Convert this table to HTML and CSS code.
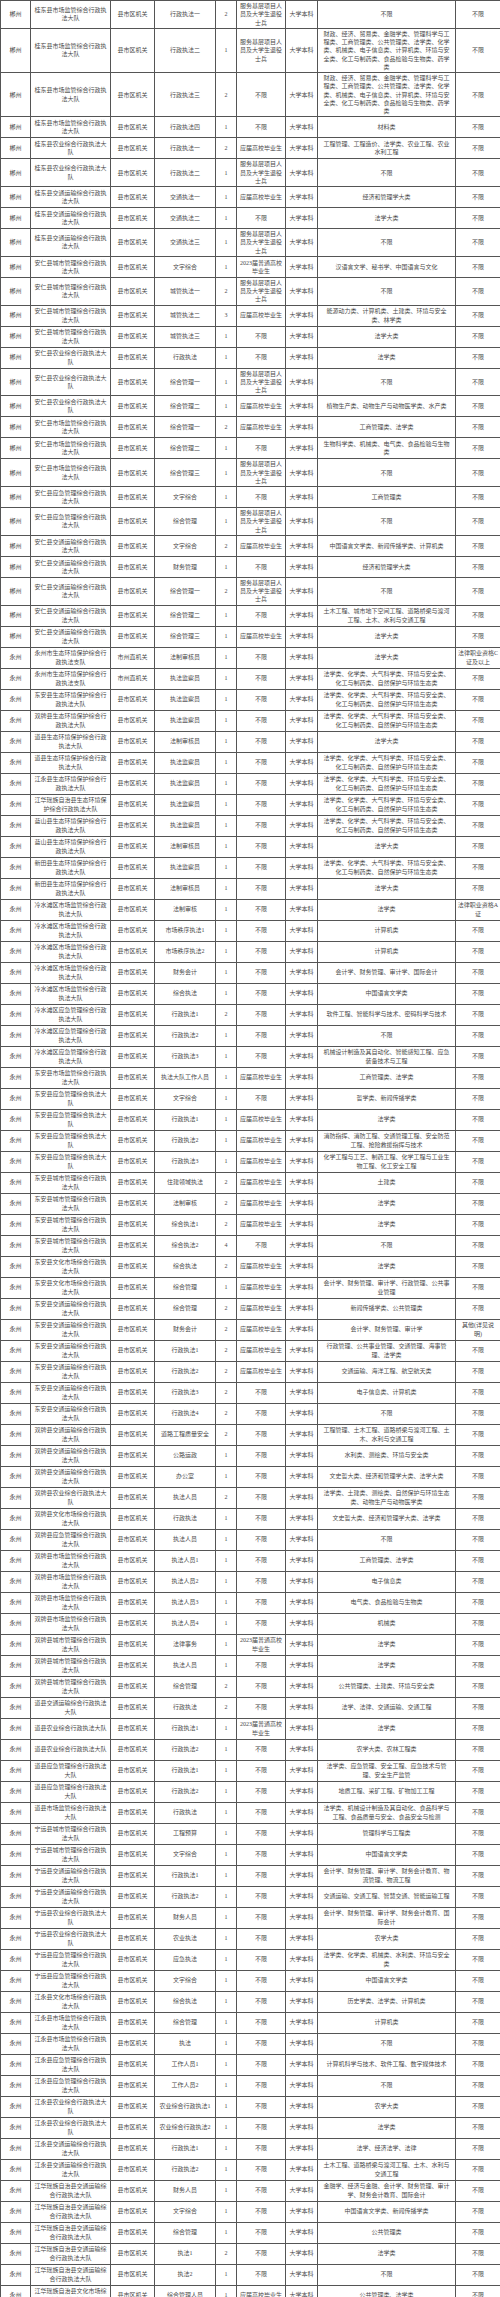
FILE: index.html
```html
<!DOCTYPE html>
<html lang="zh-CN">
<head>
<meta charset="utf-8">
<title>职位表</title>
<link rel="stylesheet" href="styles.css">
</head>
<body>
<table class="grid">
<colgroup>
<col class="c1"><col class="c2"><col class="c3"><col class="c4"><col class="c5"><col class="c6"><col class="c7"><col class="c8"><col class="c9">
</colgroup>
<tbody>
<tr><td>郴州</td><td>桂东县市场监管综合行政执法大队</td><td>县市区机关</td><td>行政执法一</td><td>2</td><td>服务基层项目人员及大学生退役士兵</td><td>大学本科</td><td>不限</td><td>不限</td></tr>
<tr><td>郴州</td><td>桂东县市场监管综合行政执法大队</td><td>县市区机关</td><td>行政执法二</td><td>1</td><td>服务基层项目人员及大学生退役士兵</td><td>大学本科</td><td>财政、经济、贸易类、金融学类、管理科学与工程类、工商管理类、公共管理类、法学类、化学类、机械类、电子信息类、计算机类、环境与安全类、化工与制药类、食品检验与生物类、药学类</td><td>不限</td></tr>
<tr><td>郴州</td><td>桂东县市场监管综合行政执法大队</td><td>县市区机关</td><td>行政执法三</td><td>2</td><td>不限</td><td>大学本科</td><td>财政、经济、贸易类、金融学类、管理科学与工程类、工商管理类、公共管理类、法学类、化学类、机械类、电子信息类、计算机类、环境与安全类、化工与制药类、食品检验与生物类、药学类</td><td>不限</td></tr>
<tr><td>郴州</td><td>桂东县市场监管综合行政执法大队</td><td>县市区机关</td><td>行政执法四</td><td>1</td><td>不限</td><td>大学本科</td><td>材料类</td><td>不限</td></tr>
<tr><td>郴州</td><td>桂东县农业综合行政执法大队</td><td>县市区机关</td><td>行政执法一</td><td>2</td><td>应届高校毕业生</td><td>大学本科</td><td>工程管理、工程造价、法学类、农业工程、农业水利工程</td><td>不限</td></tr>
<tr><td>郴州</td><td>桂东县农业综合行政执法大队</td><td>县市区机关</td><td>行政执法二</td><td>1</td><td>服务基层项目人员及大学生退役士兵</td><td>大学本科</td><td>不限</td><td>不限</td></tr>
<tr><td>郴州</td><td>桂东县交通运输综合行政执法大队</td><td>县市区机关</td><td>交通执法一</td><td>1</td><td>应届高校毕业生</td><td>大学本科</td><td>经济和管理学大类</td><td>不限</td></tr>
<tr><td>郴州</td><td>桂东县交通运输综合行政执法大队</td><td>县市区机关</td><td>交通执法二</td><td>1</td><td>不限</td><td>大学本科</td><td>法学大类</td><td>不限</td></tr>
<tr><td>郴州</td><td>桂东县交通运输综合行政执法大队</td><td>县市区机关</td><td>交通执法三</td><td>1</td><td>服务基层项目人员及大学生退役士兵</td><td>大学本科</td><td>不限</td><td>不限</td></tr>
<tr><td>郴州</td><td>安仁县城市管理综合行政执法大队</td><td>县市区机关</td><td>文字综合</td><td>1</td><td>2023届普通高校毕业生</td><td>大学本科</td><td>汉语言文学、秘书学、中国语言与文化</td><td>不限</td></tr>
<tr><td>郴州</td><td>安仁县城市管理综合行政执法大队</td><td>县市区机关</td><td>城管执法一</td><td>2</td><td>服务基层项目人员及大学生退役士兵</td><td>大学本科</td><td>不限</td><td>不限</td></tr>
<tr><td>郴州</td><td>安仁县城市管理综合行政执法大队</td><td>县市区机关</td><td>城管执法二</td><td>3</td><td>应届高校毕业生</td><td>大学本科</td><td>能源动力类、计算机类、土建类、环境与安全类、林学类</td><td>不限</td></tr>
<tr><td>郴州</td><td>安仁县城市管理综合行政执法大队</td><td>县市区机关</td><td>城管执法三</td><td>1</td><td>不限</td><td>大学本科</td><td>法学大类</td><td>不限</td></tr>
<tr><td>郴州</td><td>安仁县农业综合行政执法大队</td><td>县市区机关</td><td>行政执法</td><td>1</td><td>不限</td><td>大学本科</td><td>法学类</td><td>不限</td></tr>
<tr><td>郴州</td><td>安仁县农业综合行政执法大队</td><td>县市区机关</td><td>综合管理一</td><td>1</td><td>服务基层项目人员及大学生退役士兵</td><td>大学本科</td><td>不限</td><td>不限</td></tr>
<tr><td>郴州</td><td>安仁县农业综合行政执法大队</td><td>县市区机关</td><td>综合管理二</td><td>1</td><td>应届高校毕业生</td><td>大学本科</td><td>植物生产类、动物生产与动物医学类、水产类</td><td>不限</td></tr>
<tr><td>郴州</td><td>安仁县市场监管综合行政执法大队</td><td>县市区机关</td><td>综合管理一</td><td>2</td><td>应届高校毕业生</td><td>大学本科</td><td>工商管理类、法学类</td><td>不限</td></tr>
<tr><td>郴州</td><td>安仁县市场监管综合行政执法大队</td><td>县市区机关</td><td>综合管理二</td><td>1</td><td>不限</td><td>大学本科</td><td>生物科学类、机械类、电气类、食品检验与生物类</td><td>不限</td></tr>
<tr><td>郴州</td><td>安仁县市场监管综合行政执法大队</td><td>县市区机关</td><td>综合管理三</td><td>1</td><td>服务基层项目人员及大学生退役士兵</td><td>大学本科</td><td>不限</td><td>不限</td></tr>
<tr><td>郴州</td><td>安仁县应急管理综合行政执法大队</td><td>县市区机关</td><td>文字综合</td><td>1</td><td>不限</td><td>大学本科</td><td>工商管理类</td><td>不限</td></tr>
<tr><td>郴州</td><td>安仁县应急管理综合行政执法大队</td><td>县市区机关</td><td>综合管理</td><td>1</td><td>服务基层项目人员及大学生退役士兵</td><td>大学本科</td><td>不限</td><td>不限</td></tr>
<tr><td>郴州</td><td>安仁县交通运输综合行政执法大队</td><td>县市区机关</td><td>文字综合</td><td>2</td><td>应届高校毕业生</td><td>大学本科</td><td>中国语言文学类、新闻传播学类、计算机类</td><td>不限</td></tr>
<tr><td>郴州</td><td>安仁县交通运输综合行政执法大队</td><td>县市区机关</td><td>财务管理</td><td>1</td><td>不限</td><td>大学本科</td><td>经济和管理学大类</td><td>不限</td></tr>
<tr><td>郴州</td><td>安仁县交通运输综合行政执法大队</td><td>县市区机关</td><td>综合管理一</td><td>2</td><td>服务基层项目人员及大学生退役士兵</td><td>大学本科</td><td>不限</td><td>不限</td></tr>
<tr><td>郴州</td><td>安仁县交通运输综合行政执法大队</td><td>县市区机关</td><td>综合管理二</td><td>1</td><td>不限</td><td>大学本科</td><td>土木工程、城市地下空间工程、道路桥梁与渡河工程、土木、水利与交通工程</td><td>不限</td></tr>
<tr><td>郴州</td><td>安仁县交通运输综合行政执法大队</td><td>县市区机关</td><td>综合管理三</td><td>1</td><td>应届高校毕业生</td><td>大学本科</td><td>法学大类</td><td>不限</td></tr>
<tr><td>永州</td><td>永州市生态环境保护综合行政执法支队</td><td>市州直机关</td><td>法制审核员</td><td>1</td><td>不限</td><td>大学本科</td><td>法学大类</td><td>法律职业资格C<br>证及以上</td></tr>
<tr><td>永州</td><td>永州市生态环境保护综合行政执法支队</td><td>市州直机关</td><td>执法监察员</td><td>1</td><td>不限</td><td>大学本科</td><td>法学类、化学类、大气科学类、环境与安全类、化工与制药类、自然保护与环境生态类</td><td>不限</td></tr>
<tr><td>永州</td><td>东安县生态环境保护综合行政执法大队</td><td>县市区机关</td><td>执法监察员</td><td>1</td><td>不限</td><td>大学本科</td><td>法学类、化学类、大气科学类、环境与安全类、化工与制药类、自然保护与环境生态类</td><td>不限</td></tr>
<tr><td>永州</td><td>双牌县生态环境保护综合行政执法大队</td><td>县市区机关</td><td>执法监察员</td><td>1</td><td>不限</td><td>大学本科</td><td>法学类、化学类、大气科学类、环境与安全类、化工与制药类、自然保护与环境生态类</td><td>不限</td></tr>
<tr><td>永州</td><td>道县生态环境保护综合行政执法大队</td><td>县市区机关</td><td>法制审核员</td><td>1</td><td>不限</td><td>大学本科</td><td>法学大类</td><td>不限</td></tr>
<tr><td>永州</td><td>道县生态环境保护综合行政执法大队</td><td>县市区机关</td><td>执法监察员</td><td>1</td><td>不限</td><td>大学本科</td><td>法学类、化学类、大气科学类、环境与安全类、化工与制药类、自然保护与环境生态类</td><td>不限</td></tr>
<tr><td>永州</td><td>江永县生态环境保护综合行政执法大队</td><td>县市区机关</td><td>执法监察员</td><td>1</td><td>不限</td><td>大学本科</td><td>法学类、化学类、大气科学类、环境与安全类、化工与制药类、自然保护与环境生态类</td><td>不限</td></tr>
<tr><td>永州</td><td>江华瑶族自治县生态环境保护综合行政执法大队</td><td>县市区机关</td><td>执法监察员</td><td>1</td><td>不限</td><td>大学本科</td><td>法学类、化学类、大气科学类、环境与安全类、化工与制药类、自然保护与环境生态类</td><td>不限</td></tr>
<tr><td>永州</td><td>蓝山县生态环境保护综合行政执法大队</td><td>县市区机关</td><td>执法监察员</td><td>1</td><td>不限</td><td>大学本科</td><td>法学类、化学类、大气科学类、环境与安全类、化工与制药类、自然保护与环境生态类</td><td>不限</td></tr>
<tr><td>永州</td><td>蓝山县生态环境保护综合行政执法大队</td><td>县市区机关</td><td>法制审核员</td><td>1</td><td>不限</td><td>大学本科</td><td>法学大类</td><td>不限</td></tr>
<tr><td>永州</td><td>新田县生态环境保护综合行政执法大队</td><td>县市区机关</td><td>执法监察员</td><td>1</td><td>不限</td><td>大学本科</td><td>法学类、化学类、大气科学类、环境与安全类、化工与制药类、自然保护与环境生态类</td><td>不限</td></tr>
<tr><td>永州</td><td>新田县生态环境保护综合行政执法大队</td><td>县市区机关</td><td>法制审核员</td><td>1</td><td>不限</td><td>大学本科</td><td>法学大类</td><td>不限</td></tr>
<tr><td>永州</td><td>冷水滩区市场监管综合行政执法大队</td><td>县市区机关</td><td>法制审核</td><td>1</td><td>不限</td><td>大学本科</td><td>法学类</td><td>法律职业资格A<br>证</td></tr>
<tr><td>永州</td><td>冷水滩区市场监管综合行政执法大队</td><td>县市区机关</td><td>市场秩序执法1</td><td>1</td><td>不限</td><td>大学本科</td><td>计算机类</td><td>不限</td></tr>
<tr><td>永州</td><td>冷水滩区市场监管综合行政执法大队</td><td>县市区机关</td><td>市场秩序执法2</td><td>1</td><td>不限</td><td>大学本科</td><td>计算机类</td><td>不限</td></tr>
<tr><td>永州</td><td>冷水滩区市场监管综合行政执法大队</td><td>县市区机关</td><td>财务会计</td><td>1</td><td>不限</td><td>大学本科</td><td>会计学、财务管理、审计学、国际会计</td><td>不限</td></tr>
<tr><td>永州</td><td>冷水滩区市场监管综合行政执法大队</td><td>县市区机关</td><td>综合执法</td><td>1</td><td>不限</td><td>大学本科</td><td>中国语言文学类</td><td>不限</td></tr>
<tr><td>永州</td><td>冷水滩区应急管理综合行政执法大队</td><td>县市区机关</td><td>行政执法1</td><td>2</td><td>不限</td><td>大学本科</td><td>软件工程、智能科学与技术、密码科学与技术</td><td>不限</td></tr>
<tr><td>永州</td><td>冷水滩区应急管理综合行政执法大队</td><td>县市区机关</td><td>行政执法2</td><td>1</td><td>不限</td><td>大学本科</td><td>不限</td><td>不限</td></tr>
<tr><td>永州</td><td>冷水滩区应急管理综合行政执法大队</td><td>县市区机关</td><td>行政执法3</td><td>1</td><td>不限</td><td>大学本科</td><td>机械设计制造及其自动化、智能感知工程、应急装备技术与工程</td><td>不限</td></tr>
<tr><td>永州</td><td>东安县市场监管综合行政执法大队</td><td>县市区机关</td><td>执法大队工作人员</td><td>1</td><td>应届高校毕业生</td><td>大学本科</td><td>工商管理类、法学类</td><td>不限</td></tr>
<tr><td>永州</td><td>东安县应急管理综合执法大队</td><td>县市区机关</td><td>文字综合</td><td>1</td><td>不限</td><td>大学本科</td><td>哲学类、新闻传播学类</td><td>不限</td></tr>
<tr><td>永州</td><td>东安县应急管理综合执法大队</td><td>县市区机关</td><td>行政执法1</td><td>1</td><td>应届高校毕业生</td><td>大学本科</td><td>法学类</td><td>不限</td></tr>
<tr><td>永州</td><td>东安县应急管理综合执法大队</td><td>县市区机关</td><td>行政执法2</td><td>1</td><td>应届高校毕业生</td><td>大学本科</td><td>消防指挥、消防工程、交通管理工程、安全防范工程、抢险救援指挥与技术</td><td>不限</td></tr>
<tr><td>永州</td><td>东安县应急管理综合执法大队</td><td>县市区机关</td><td>行政执法3</td><td>1</td><td>应届高校毕业生</td><td>大学本科</td><td>化学工程与工艺、制药工程、化学工程与工业生物工程、化工安全工程</td><td>不限</td></tr>
<tr><td>永州</td><td>东安县城市管理综合行政执法大队</td><td>县市区机关</td><td>住建领域执法</td><td>2</td><td>应届高校毕业生</td><td>大学本科</td><td>土建类</td><td>不限</td></tr>
<tr><td>永州</td><td>东安县城市管理综合行政执法大队</td><td>县市区机关</td><td>法制审核</td><td>2</td><td>应届高校毕业生</td><td>大学本科</td><td>法学类</td><td>不限</td></tr>
<tr><td>永州</td><td>东安县城市管理综合行政执法大队</td><td>县市区机关</td><td>综合执法1</td><td>2</td><td>应届高校毕业生</td><td>大学本科</td><td>法学类</td><td>不限</td></tr>
<tr><td>永州</td><td>东安县城市管理综合行政执法大队</td><td>县市区机关</td><td>综合执法2</td><td>4</td><td>不限</td><td>大学本科</td><td>不限</td><td>不限</td></tr>
<tr><td>永州</td><td>东安县文化市场综合行政执法大队</td><td>县市区机关</td><td>综合执法</td><td>2</td><td>应届高校毕业生</td><td>大学本科</td><td>法学类</td><td>不限</td></tr>
<tr><td>永州</td><td>东安县文化市场综合行政执法大队</td><td>县市区机关</td><td>综合管理</td><td>1</td><td>应届高校毕业生</td><td>大学本科</td><td>会计学、财务管理、审计学、行政管理、公共事业管理</td><td>不限</td></tr>
<tr><td>永州</td><td>东安县交通运输综合行政执法大队</td><td>县市区机关</td><td>综合管理</td><td>2</td><td>应届高校毕业生</td><td>大学本科</td><td>新闻传播学类、公共管理类</td><td>不限</td></tr>
<tr><td>永州</td><td>东安县交通运输综合行政执法大队</td><td>县市区机关</td><td>财务会计</td><td>2</td><td>应届高校毕业生</td><td>大学本科</td><td>会计学、财务管理、审计学</td><td>其他(详见说<br>明)</td></tr>
<tr><td>永州</td><td>东安县交通运输综合行政执法大队</td><td>县市区机关</td><td>行政执法1</td><td>2</td><td>应届高校毕业生</td><td>大学本科</td><td>行政管理、公共事业管理、交通管理、海事管理、法学类</td><td>不限</td></tr>
<tr><td>永州</td><td>东安县交通运输综合行政执法大队</td><td>县市区机关</td><td>行政执法2</td><td>2</td><td>应届高校毕业生</td><td>大学本科</td><td>交通运输、海洋工程、航空航天类</td><td>不限</td></tr>
<tr><td>永州</td><td>东安县交通运输综合行政执法大队</td><td>县市区机关</td><td>行政执法3</td><td>2</td><td>不限</td><td>大学本科</td><td>电子信息类、计算机类</td><td>不限</td></tr>
<tr><td>永州</td><td>东安县交通运输综合行政执法大队</td><td>县市区机关</td><td>行政执法4</td><td>2</td><td>不限</td><td>大学本科</td><td>不限</td><td>不限</td></tr>
<tr><td>永州</td><td>双牌县交通运输综合行政执法大队</td><td>县市区机关</td><td>道路工程质量安全</td><td>2</td><td>不限</td><td>大学本科</td><td>工程管理、土木工程、道路桥梁与渡河工程、土木、水利与交通工程</td><td>不限</td></tr>
<tr><td>永州</td><td>双牌县交通运输综合行政执法大队</td><td>县市区机关</td><td>公路运政</td><td>1</td><td>不限</td><td>大学本科</td><td>水利类、测绘类、环境与安全类</td><td>不限</td></tr>
<tr><td>永州</td><td>双牌县交通运输综合行政执法大队</td><td>县市区机关</td><td>办公室</td><td>1</td><td>不限</td><td>大学本科</td><td>文史哲大类、经济和管理学大类、法学大类</td><td>不限</td></tr>
<tr><td>永州</td><td>双牌县农业综合行政执法大队</td><td>县市区机关</td><td>执法人员</td><td>2</td><td>不限</td><td>大学本科</td><td>法学类、土建类、测绘类、自然保护与环境生态类、动物生产与动物医学类</td><td>不限</td></tr>
<tr><td>永州</td><td>双牌县文化市场综合行政执法大队</td><td>县市区机关</td><td>行政执法</td><td>1</td><td>不限</td><td>大学本科</td><td>文史哲大类、经济和管理学大类、法学类</td><td>不限</td></tr>
<tr><td>永州</td><td>双牌县应急管理综合行政执法大队</td><td>县市区机关</td><td>执法人员</td><td>1</td><td>不限</td><td>大学本科</td><td>不限</td><td>不限</td></tr>
<tr><td>永州</td><td>双牌县市场监管综合行政执法大队</td><td>县市区机关</td><td>执法人员1</td><td>1</td><td>不限</td><td>大学本科</td><td>工商管理类、法学类</td><td>不限</td></tr>
<tr><td>永州</td><td>双牌县市场监管综合行政执法大队</td><td>县市区机关</td><td>执法人员2</td><td>1</td><td>不限</td><td>大学本科</td><td>电子信息类</td><td>不限</td></tr>
<tr><td>永州</td><td>双牌县市场监管综合行政执法大队</td><td>县市区机关</td><td>执法人员3</td><td>1</td><td>不限</td><td>大学本科</td><td>电气类、食品检验与生物类</td><td>不限</td></tr>
<tr><td>永州</td><td>双牌县市场监管综合行政执法大队</td><td>县市区机关</td><td>执法人员4</td><td>1</td><td>不限</td><td>大学本科</td><td>机械类</td><td>不限</td></tr>
<tr><td>永州</td><td>双牌县城市管理综合行政执法大队</td><td>县市区机关</td><td>法律事务</td><td>1</td><td>2023届普通高校毕业生</td><td>大学本科</td><td>法学类</td><td>不限</td></tr>
<tr><td>永州</td><td>双牌县城市管理综合行政执法大队</td><td>县市区机关</td><td>执法人员</td><td>1</td><td>不限</td><td>大学本科</td><td>法学类</td><td>不限</td></tr>
<tr><td>永州</td><td>双牌县城市管理综合行政执法大队</td><td>县市区机关</td><td>综合管理</td><td>2</td><td>不限</td><td>大学本科</td><td>公共管理类、土建类、环境与安全类</td><td>不限</td></tr>
<tr><td>永州</td><td>道县交通运输综合行政执法大队</td><td>县市区机关</td><td>行政执法</td><td>2</td><td>不限</td><td>大学本科</td><td>法学、法律、交通运输、交通工程</td><td>不限</td></tr>
<tr><td>永州</td><td>道县农业综合行政执法大队</td><td>县市区机关</td><td>行政执法1</td><td>1</td><td>2023届普通高校毕业生</td><td>大学本科</td><td>法学类</td><td>不限</td></tr>
<tr><td>永州</td><td>道县农业综合行政执法大队</td><td>县市区机关</td><td>行政执法2</td><td>1</td><td>不限</td><td>大学本科</td><td>农学大类、农林工程类</td><td>不限</td></tr>
<tr><td>永州</td><td>道县应急管理综合行政执法大队</td><td>县市区机关</td><td>行政执法1</td><td>1</td><td>不限</td><td>大学本科</td><td>法学类、应急管理、安全工程、应急技术与管理、安全生产监管</td><td>不限</td></tr>
<tr><td>永州</td><td>道县应急管理综合行政执法大队</td><td>县市区机关</td><td>行政执法2</td><td>1</td><td>不限</td><td>大学本科</td><td>地质工程、采矿工程、矿物加工工程</td><td>不限</td></tr>
<tr><td>永州</td><td>道县市场监管综合行政执法大队</td><td>县市区机关</td><td>行政执法</td><td>1</td><td>不限</td><td>大学本科</td><td>法学类、机械设计制造及其自动化、食品科学与工程、食品质量与安全、食品安全与检测</td><td>不限</td></tr>
<tr><td>永州</td><td>宁远县城市管理综合行政执法大队</td><td>县市区机关</td><td>工程预算</td><td>1</td><td>不限</td><td>大学本科</td><td>管理科学与工程类</td><td>不限</td></tr>
<tr><td>永州</td><td>宁远县城市管理综合行政执法大队</td><td>县市区机关</td><td>文字综合</td><td>1</td><td>不限</td><td>大学本科</td><td>中国语言文学类</td><td>不限</td></tr>
<tr><td>永州</td><td>宁远县交通运输综合行政执法大队</td><td>县市区机关</td><td>行政执法1</td><td>1</td><td>不限</td><td>大学本科</td><td>会计学、财务管理、审计学、财务会计教育、物流管理、物流工程</td><td>不限</td></tr>
<tr><td>永州</td><td>宁远县交通运输综合行政执法大队</td><td>县市区机关</td><td>行政执法2</td><td>1</td><td>不限</td><td>大学本科</td><td>交通运输、交通工程、智慧交通、智能运输工程</td><td>不限</td></tr>
<tr><td>永州</td><td>宁远县农业综合行政执法大队</td><td>县市区机关</td><td>财务人员</td><td>1</td><td>不限</td><td>大学本科</td><td>会计学、财务管理、审计学、财务会计教育、国际会计</td><td>不限</td></tr>
<tr><td>永州</td><td>宁远县农业综合行政执法大队</td><td>县市区机关</td><td>农业执法</td><td>1</td><td>不限</td><td>大学本科</td><td>农学大类</td><td>不限</td></tr>
<tr><td>永州</td><td>宁远县应急管理综合行政执法大队</td><td>县市区机关</td><td>应急执法</td><td>1</td><td>不限</td><td>大学本科</td><td>法学类、化学类、机械类、水利类、环境与安全类</td><td>不限</td></tr>
<tr><td>永州</td><td>宁远县应急管理综合行政执法大队</td><td>县市区机关</td><td>文字综合</td><td>1</td><td>不限</td><td>大学本科</td><td>中国语言文学类</td><td>不限</td></tr>
<tr><td>永州</td><td>江永县文化市场综合行政执法大队</td><td>县市区机关</td><td>综合执法</td><td>1</td><td>不限</td><td>大学本科</td><td>历史学类、法学类、计算机类</td><td>不限</td></tr>
<tr><td>永州</td><td>江永县市场监管综合行政执法大队</td><td>县市区机关</td><td>综合管理</td><td>1</td><td>不限</td><td>大学本科</td><td>计算机类</td><td>不限</td></tr>
<tr><td>永州</td><td>江永县市场监管综合行政执法大队</td><td>县市区机关</td><td>执法</td><td>1</td><td>不限</td><td>大学本科</td><td>不限</td><td>不限</td></tr>
<tr><td>永州</td><td>江永县应急管理综合行政执法大队</td><td>县市区机关</td><td>工作人员1</td><td>1</td><td>不限</td><td>大学本科</td><td>计算机科学与技术、软件工程、数字媒体技术</td><td>不限</td></tr>
<tr><td>永州</td><td>江永县应急管理综合行政执法大队</td><td>县市区机关</td><td>工作人员2</td><td>1</td><td>不限</td><td>大学本科</td><td>不限</td><td>不限</td></tr>
<tr><td>永州</td><td>江永县农业综合行政执法大队</td><td>县市区机关</td><td>农业综合行政执法1</td><td>1</td><td>不限</td><td>大学本科</td><td>农学大类</td><td>不限</td></tr>
<tr><td>永州</td><td>江永县农业综合行政执法大队</td><td>县市区机关</td><td>农业综合行政执法2</td><td>1</td><td>不限</td><td>大学本科</td><td>法学类</td><td>不限</td></tr>
<tr><td>永州</td><td>江永县交通运输综合行政执法大队</td><td>县市区机关</td><td>行政执法1</td><td>1</td><td>不限</td><td>大学本科</td><td>法学、经济法学、法律</td><td>不限</td></tr>
<tr><td>永州</td><td>江永县交通运输综合行政执法大队</td><td>县市区机关</td><td>行政执法2</td><td>1</td><td>不限</td><td>大学本科</td><td>土木工程、道路桥梁与渡河工程、土木、水利与交通工程</td><td>不限</td></tr>
<tr><td>永州</td><td>江华瑶族自治县交通运输综合行政执法大队</td><td>县市区机关</td><td>财务人员</td><td>1</td><td>不限</td><td>大学本科</td><td>金融学、经济与金融、会计学、财务管理、审计学、财务会计教育、国际会计</td><td>不限</td></tr>
<tr><td>永州</td><td>江华瑶族自治县交通运输综合行政执法大队</td><td>县市区机关</td><td>文字综合</td><td>1</td><td>不限</td><td>大学本科</td><td>中国语言文学类、新闻传播学类</td><td>不限</td></tr>
<tr><td>永州</td><td>江华瑶族自治县交通运输综合行政执法大队</td><td>县市区机关</td><td>综合管理</td><td>1</td><td>不限</td><td>大学本科</td><td>公共管理类</td><td>不限</td></tr>
<tr><td>永州</td><td>江华瑶族自治县交通运输综合行政执法大队</td><td>县市区机关</td><td>执法1</td><td>2</td><td>不限</td><td>大学本科</td><td>法学类</td><td>不限</td></tr>
<tr><td>永州</td><td>江华瑶族自治县交通运输综合行政执法大队</td><td>县市区机关</td><td>执法2</td><td>1</td><td>不限</td><td>大学本科</td><td>不限</td><td>不限</td></tr>
<tr><td>永州</td><td>江华瑶族自治县文化市场综合行政执法大队</td><td>县市区机关</td><td>综合管理人员</td><td>1</td><td>应届高校毕业生</td><td>大学本科</td><td>公共管理类、法学类</td><td>不限</td></tr>
</tbody>
</table>
</body>
</html>
```

FILE: styles.css
```css
html, body {
  margin: 0;
  padding: 0;
  background: #ffffff;
}

.grid {
  border-collapse: collapse;
  table-layout: fixed;
  width: 500px;
  font-family: "Liberation Serif", "Noto Sans CJK SC", serif;
  font-size: 6px;
  line-height: 8.25px;
  color: #4a4a4a;
}

.c1 { width: 30px; }
.c2 { width: 80px; }
.c3 { width: 44px; }
.c4 { width: 61px; }
.c5 { width: 21px; }
.c6 { width: 49px; }
.c7 { width: 32px; }
.c8 { width: 138px; }
.c9 { width: 45px; }

.grid tr {
  height: 21px;
}

.grid td {
  border: 1px solid #555555;
  padding: 1px 2px;
  text-align: center;
  vertical-align: middle;
}

.grid td:nth-child(8) {
  padding: 1px 4px;
}

.grid td:nth-child(9) {
  padding: 1px 1px;
}
```
